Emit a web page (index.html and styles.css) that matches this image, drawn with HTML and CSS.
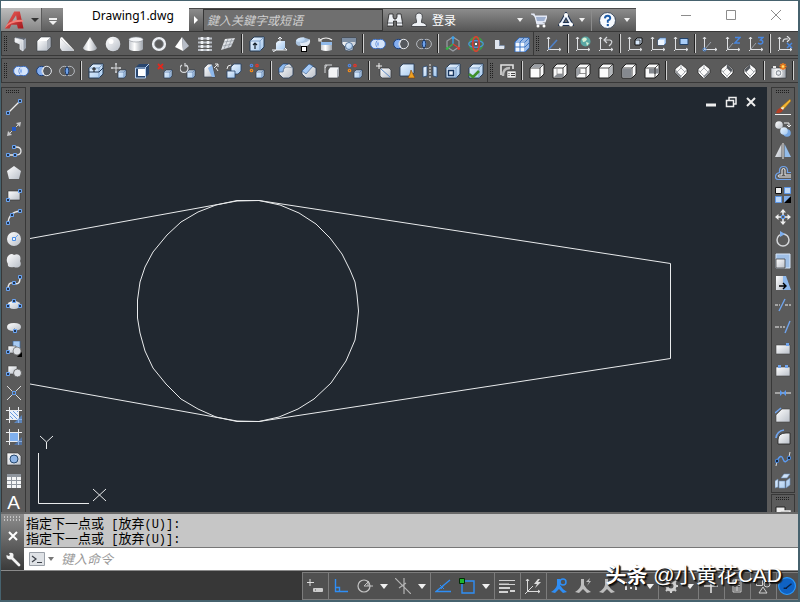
FILE: index.html
```
<!DOCTYPE html>
<html lang="zh-CN">
<head>
  <meta charset="UTF-8" />
  <meta name="viewport" content="width=device-width, initial-scale=1.0" />
  <title>Drawing1.dwg</title>
  <link rel="stylesheet" href="styles.css">
</head>
<body>
  <!-- Icon set, every symbol is drawn on a 16x16 grid -->
  <svg class="sprite" aria-hidden="true">
    <defs>
      <linearGradient id="gw" x1="0" y1="0" x2="1" y2="1"><stop offset="0" stop-color="#fff"/><stop offset="1" stop-color="#b9bfc8"/></linearGradient>
      <linearGradient id="gb" x1="0" y1="0" x2="1" y2="1"><stop offset="0" stop-color="#eef6ff"/><stop offset="1" stop-color="#a4c8ee"/></linearGradient>
      <linearGradient id="gr" x1="0" y1="0" x2="1" y2="1"><stop offset="0" stop-color="#f0625a"/><stop offset="1" stop-color="#a3161c"/></linearGradient>
      <linearGradient id="gc" x1="0" y1="0" x2="1" y2="0"><stop offset="0" stop-color="#c4c8ce"/><stop offset=".4" stop-color="#fff"/><stop offset="1" stop-color="#9da3ab"/></linearGradient>
    </defs>

    <!-- solids -->
    <symbol id="polysolid" viewBox="0 0 16 16"><path d="M2 2l8 2v11l-3-2V8L2 6z" fill="url(#gw)"/><path d="M10 4l3-2v10l-3 3z" fill="#9aa2ae"/><path d="M2 2l2-1 9 1-3 2z" fill="#5f6670"/><path d="M2 6V2l8 2v11l-3-2V8z" fill="none" stroke="#e9ecf2" stroke-width=".8"/></symbol>
    <symbol id="box" viewBox="0 0 16 16"><path d="M1 5h10v10H1z" fill="url(#gw)"/><path d="M1 5l4-4h10l-4 4z" fill="#fff"/><path d="M11 5l4-4v10l-4 4z" fill="#aab0b9"/><path d="M1 5l4-4h10v10l-4 4H1z" fill="none" stroke="#3b3f46" stroke-width=".6"/></symbol>
    <symbol id="wedge" viewBox="0 0 16 16"><path d="M1 2v10l2 3h12z" fill="url(#gw)"/><path d="M1 2l2-1 12 13v1z" fill="#fff"/></symbol>
    <symbol id="cone" viewBox="0 0 16 16"><path d="M8 1l7 11q-1 3-7 3t-7-3z" fill="url(#gc)"/></symbol>
    <symbol id="sphere" viewBox="0 0 16 16"><circle cx="8" cy="8" r="7.3" fill="url(#gw)"/><circle cx="6" cy="5.5" r="2.5" fill="#fff"/></symbol>
    <symbol id="cylinder" viewBox="0 0 16 16"><path d="M1 3v10q1 2 7 2t7-2V3z" fill="url(#gc)"/><ellipse cx="8" cy="3.5" rx="7" ry="2.5" fill="#f4f6f9" stroke="#848a92" stroke-width=".6"/></symbol>
    <symbol id="torus" viewBox="0 0 16 16"><circle cx="8" cy="8" r="5.8" fill="none" stroke="#eceff3" stroke-width="2.6"/><circle cx="8" cy="8" r="4.3" fill="none" stroke="#8f959e" stroke-width=".6"/></symbol>
    <symbol id="pyramid" viewBox="0 0 16 16"><path d="M8 1L1 11l8 4z" fill="#fff"/><path d="M8 1l7 9-6 5z" fill="#b7bdc7"/></symbol>
    <symbol id="helix" viewBox="0 0 16 16"><path d="M1 2.500h14M1 6.500h14M1 10.500h14M1 14h14" stroke="#b9bec6" stroke-width="1.800"/><path d="M5 1v14M11 1v14" stroke="#edf0f4" stroke-width="2.600" stroke-dasharray="3 1"/></symbol>
    <symbol id="planar" viewBox="0 0 16 16"><path d="M5 3l10-1-4 9-10 3z" fill="url(#gw)"/><path d="M8 3l-4 10M12 2.500l-4 9.500M4 6l10-1.500M3 10l9-2" stroke="#8d939c" stroke-width=".7"/></symbol>

    <!-- modelling and solid editing -->
    <symbol id="bluebox" viewBox="0 0 16 16"><path d="M1 5l4-4h10v10l-4 4H1z" fill="url(#gb)" stroke="#1c3350" stroke-width=".9"/><path d="M1 5h10v10M11 5l4-4" fill="none" stroke="#6d92c0" stroke-width=".8"/></symbol>
    <symbol id="push" viewBox="0 0 16 16"><use href="#bluebox"/><path d="M6 13V7M4 9l2-2 2 2" fill="none" stroke="#15202c" stroke-width="1.200"/></symbol>
    <symbol id="extrude" viewBox="0 0 16 16"><path d="M4 7l2-2h7v7l-2 2H4z" fill="url(#gb)"/><path d="M8 7V1M6 3l2-2 2 2M0 14h15M4 14l-3 2M13 12l2 2" fill="none" stroke="#eef1f5"/></symbol>
    <symbol id="sweep" viewBox="0 0 16 16"><path d="M1 5q1-4 8-3.500l6 2q0 5-6 4.500l-5 2Q0 9 1 5z" fill="#a9c1dc"/><path d="M1 5q1-4 8-3.500L10 4Q6 8 1 5z" fill="url(#gb)"/><path d="M5 6.500q5 2 10-3 1 6-5 7H6z" fill="#e3ebf5"/><rect x="6.500" y="10.500" width="5" height="5" fill="#fff" stroke="#000"/></symbol>
    <symbol id="revolve" viewBox="0 0 16 16"><path d="M3 6h11v8q-6 2-11 0z" fill="url(#gc)"/><path d="M3 6h11v3H3z" fill="#8fb8e8"/><path d="M2 4q6-4 12 0M1 2v3h3" fill="none" stroke="#f4f4f4" stroke-width="1.200"/></symbol>
    <symbol id="loft" viewBox="0 0 16 16"><path d="M1 2h14v6l-3 3v3q-4 2-8 0v-3L1 8z" fill="url(#gw)" stroke="#2e4058" stroke-width=".7"/><path d="M1 2h14v4H1z" fill="#7d8ea3"/><circle cx="8" cy="10" r="3.500" fill="url(#gb)" stroke="#54749b"/></symbol>
    <symbol id="union" viewBox="0 0 16 16"><circle cx="5.300" cy="8" r="4.700" fill="#d4e4fb" stroke="#3d6fc4"/><circle cx="10.700" cy="8" r="4.700" fill="#d4e4fb" stroke="#3d6fc4"/><path d="M8 4q-3 4 0 8 3-4 0-8z" fill="#7da7ee" stroke="#fff" stroke-width=".6"/></symbol>
    <symbol id="subtract" viewBox="0 0 16 16"><circle cx="5.300" cy="8" r="4.700" fill="#84aef0" stroke="#1c3f7a"/><circle cx="10.700" cy="8" r="4.700" fill="#55585d" stroke="#e6e9ee"/><path d="M8 4q-3 4 0 8" fill="none" stroke="#e6e9ee"/></symbol>
    <symbol id="intersect" viewBox="0 0 16 16"><g fill="none" stroke="#b4b8be"><circle cx="5.300" cy="8" r="4.700"/><circle cx="10.700" cy="8" r="4.700"/></g><path d="M8 3.600q-4 4.400 0 8.800 4-4.400 0-8.800z" fill="#6fa2ea" stroke="#0f2c5b"/></symbol>
    <symbol id="gizmo" viewBox="0 0 16 16"><path d="M8 1l6 4v6l-6 4-6-4V5z" fill="none" stroke="#9b9fa5" stroke-width="1.200"/><path d="M8 8V2" stroke="#3aa0ea" stroke-width="1.400"/><path d="M8 8l-5 4" stroke="#34b545" stroke-width="1.200"/><path d="M8 8l6 4" stroke="#e23b30" stroke-width="1.200"/><circle cx="8" cy="1.800" r="1.500" fill="#3aa0ea"/><circle cx="2.200" cy="12.600" r="1.400" fill="#34b545"/><circle cx="13.800" cy="12.600" r="1.400" fill="#e23b30"/></symbol>
    <symbol id="orbit" viewBox="0 0 16 16"><circle cx="8" cy="8" r="6.500" fill="none" stroke="#3f9a45" stroke-width="1.800"/><ellipse cx="8" cy="8" rx="7.300" ry="3.300" fill="none" stroke="#4a90d9" stroke-width="1.300"/><ellipse cx="8" cy="8" rx="3.300" ry="7.300" fill="none" stroke="#d93f33" stroke-width="1.600"/><rect x="7" y="7" width="2" height="2" fill="#fff"/></symbol>
    <symbol id="lshape" viewBox="0 0 16 16"><path d="M4 4h4v6h5v3H4z" fill="#dfe5ee"/><path d="M8 4l1 1v4h4l1 1v2l-1 1v-3H8z" fill="#8191a8"/></symbol>
    <symbol id="cubes" viewBox="0 0 16 16"><path d="M1 6l4-4h10v10l-4 4H1z" fill="#f3f8ff" stroke="#2e6cc4"/><path d="M1 6h10v10M11 6l4-4M1 11h10l4-4M6 6v10M3 4h10v10M10 2L6 6" fill="none" stroke="#2e6cc4" stroke-width=".9"/></symbol>
    <symbol id="extrface" viewBox="0 0 16 16"><use href="#bluebox"/><path d="M1 9h10l4-4" fill="none" stroke="#1c3350"/><path d="M6 9V4M4 6h4" stroke="#111"/></symbol>
    <symbol id="smallbox" viewBox="0 0 16 16"><path d="M7 9l2-2h6v6l-2 2H7z" fill="url(#gb)" stroke="#24344a" stroke-width=".7"/><path d="M7 9h6v6M13 9l2-2" fill="none" stroke="#4d70a0" stroke-width=".7"/></symbol>
    <symbol id="moveface" viewBox="0 0 16 16"><use href="#smallbox"/><path d="M5 0v10M0 5h10M4 1h2M4 9h2M1 4v2M9 4v2" stroke="#d9dbde"/></symbol>
    <symbol id="offsetface" viewBox="0 0 16 16"><path d="M1 5l4-4h10v10l-4 4H1z" fill="#29466e"/><path d="M4 6h7v7H4z" fill="#fff"/><path d="M1.500 5h10v10h-10zM11 5l4-4" fill="none" stroke="#b6d0f1"/></symbol>
    <symbol id="delface" viewBox="0 0 16 16"><use href="#smallbox"/><path d="M1 1l5 5M6 1L1 6" stroke="#e1281d" stroke-width="1.800"/></symbol>
    <symbol id="rotface" viewBox="0 0 16 16"><use href="#smallbox"/><path d="M2 2a4 4 0 1 0 4 0M5 0v3h3" fill="none" stroke="#d9dbde" stroke-width="1.200"/></symbol>
    <symbol id="taperface" viewBox="0 0 16 16"><path d="M1 14V5l4-4h4l3 13z" fill="url(#gw)" stroke="#3b4350" stroke-width=".7"/><path d="M5 5l4-3 3 12H9z" fill="#8db8ec"/><path d="M11 5l4-4M12 1h3v3M15 8l-2-3" fill="none" stroke="#e8e8e8"/></symbol>
    <symbol id="copyface" viewBox="0 0 16 16"><path d="M5 4l3-3h7v7l-3 3H5z" fill="url(#gb)" stroke="#23436b" stroke-width=".8"/><path d="M1 8h8v7H1z" fill="url(#gb)" stroke="#23436b" stroke-width=".8"/><path d="M1 6q0-4 4-4" fill="none" stroke="#eee"/></symbol>
    <symbol id="colorface" viewBox="0 0 16 16"><use href="#smallbox"/><g stroke-width="1.300" fill="none"><circle cx="2.500" cy="2.500" r="1.200" stroke="#4e86e0"/><circle cx="8" cy="2.500" r="1.200" stroke="#e0372c"/><circle cx="2.500" cy="7.500" r="1.200" stroke="#ef8a1e"/></g></symbol>
    <symbol id="fillet" viewBox="0 0 16 16"><path d="M1 5l4-4h7l3 4v7l-4 3H5l-4-4z" fill="url(#gw)" stroke="#263a55" stroke-width=".8"/><path d="M1 5l4-4h5q-4 1-5 8H1z" fill="#8fb9ec" stroke="#2f5688" stroke-width=".6"/><path d="M5 9q0-5 5-5l5 1" fill="none" stroke="#8390a2" stroke-width=".8"/></symbol>
    <symbol id="chamfer" viewBox="0 0 16 16"><path d="M1 8l7-7 7 4v7l-4 3H5l-4-4z" fill="url(#gw)" stroke="#263a55" stroke-width=".8"/><path d="M1 8l7-7 4 2-7 8z" fill="#a5c9f5" stroke="#2f5688" stroke-width=".6"/></symbol>
    <symbol id="copyedge" viewBox="0 0 16 16"><path d="M4 7l2-3h9v9l-2 2H4z" fill="#f3f4f6" stroke="#3a3d42" stroke-width=".7"/><path d="M13 7l2-3v9l-2 2z" fill="#aeb3bb"/><path d="M1 10V2h7M1 5l2-3" fill="none" stroke="#d6d8db"/></symbol>
    <symbol id="imprint" viewBox="0 0 16 16"><path d="M4 6l1-1h8l2 2v8H6l-2-2z" fill="url(#gw)" stroke="#30343a" stroke-width=".7"/><path d="M5 6l9 8" stroke="#5f8ac4"/><path d="M3 0v6M0 3h6" stroke="#f3f3f3"/></symbol>
    <symbol id="clean" viewBox="0 0 16 16"><path d="M1 4l3-3h11v9l-3 3H1z" fill="url(#gb)" stroke="#1e3654" stroke-width=".8"/><path d="M12 7l-1 4-2 4h7l-2-4z" fill="#f0a122" stroke="#7a3e08" stroke-width=".6"/></symbol>
    <symbol id="separate" viewBox="0 0 16 16"><path d="M1 4l4-1v10l-4 1zM11 3l4 1v10l-4-1z" fill="url(#gb)" stroke="#264872" stroke-width=".8"/><path d="M8 1v14" stroke="#eee" stroke-dasharray="2 1"/></symbol>
    <symbol id="shell" viewBox="0 0 16 16"><use href="#bluebox"/><path d="M3.500 7.500h5v5h-5z" fill="#e9f1fb" stroke="#18365f" stroke-width="1.400"/></symbol>
    <symbol id="check" viewBox="0 0 16 16"><use href="#bluebox"/><path d="M1 11l4 3 6-6" fill="none" stroke="#3f8f2c" stroke-width="2.600"/></symbol>
    <symbol id="viewmgr" viewBox="0 0 16 16"><path d="M1 12V2h12v4" fill="none" stroke="#e2e2e2" stroke-width="1.600"/><path d="M3 13q0-8 7-8" fill="none" stroke="#bbb" stroke-width="2.400"/><rect x="7" y="8" width="9" height="7" fill="#eee" stroke="#444" stroke-width=".6"/><path d="M8.500 10.500h1M11 10.500h4M8.500 12.500h1M11 12.500h4" stroke="#444"/></symbol>

    <!-- UCS -->
    <symbol id="axes" viewBox="0 0 16 16"><path d="M2.500 1v12.500H15M1 3l1.500-2L4 3M13 12l2 1.500-2 1.500M1 15l1.500-1.500" fill="none" stroke="#dfe1e4"/></symbol>
    <symbol id="ucs" viewBox="0 0 16 16"><use href="#axes"/><path d="M3 13l8-9" stroke="#4e80c8" stroke-width="1.600"/></symbol>
    <symbol id="ucsworld" viewBox="0 0 16 16"><use href="#axes"/><circle cx="10.500" cy="5.500" r="5" fill="#5aa7a4"/><path d="M7 3q3-3 5 0-1 3-4 3zM11 6l3 1-2 3z" fill="#d8f0d4"/></symbol>
    <symbol id="ucsprev" viewBox="0 0 16 16"><use href="#axes"/><path d="M7 4h5q3 1 1 4l-2 2M9 1L6 4l3 3" fill="none" stroke="#d5d7da" stroke-width="1.200"/></symbol>
    <symbol id="ucsface" viewBox="0 0 16 16"><use href="#axes"/><path d="M8 4l2-2h5v5l-2 2H8z" fill="#d7e8fb" stroke="#111"/><path d="M8 4h5v5" fill="none" stroke="#111" stroke-width=".8"/></symbol>
    <symbol id="ucsobj" viewBox="0 0 16 16"><use href="#axes"/><path d="M8 4l2-2h6v5l-2 2H8z" fill="#bcd9fa" stroke="#3a6db0" stroke-width=".6"/><path d="M8 4h6v5H8z" fill="#eef6ff"/></symbol>
    <symbol id="ucsview" viewBox="0 0 16 16"><use href="#axes"/><path d="M7 2.500h8v6H7z" fill="#a9cdf7" stroke="#23436b"/></symbol>
    <symbol id="ucsorigin" viewBox="0 0 16 16"><use href="#axes"/><path d="M3 13l6-7" stroke="#9aa0a8"/><circle cx="2.500" cy="13.500" r="1.500" fill="none" stroke="#4f90e6"/></symbol>
    <symbol id="ucsz" viewBox="0 0 16 16"><use href="#axes"/><path d="M3 13l5-6" stroke="#9aa0a8"/><path d="M10 1.500h5l-5 5.500h5" fill="none" stroke="#4a86dc" stroke-width="1.600"/></symbol>
    <symbol id="ucs3" viewBox="0 0 16 16"><use href="#axes"/><path d="M3 13l5-6" stroke="#9aa0a8"/><path d="M10 1.500h5l-2.500 2.500q3 .5 2 3-2 2-4.500 0" fill="none" stroke="#4a86dc" stroke-width="1.500"/></symbol>
    <symbol id="ucsx" viewBox="0 0 16 16"><use href="#axes"/><path d="M6 6q0-4 5-3M10 0l3 3-3 3" fill="none" stroke="#dfe1e4" stroke-width="1.200"/><path d="M10 7l5 5M15 7l-5 5" stroke="#4a86dc" stroke-width="1.500"/></symbol>

    <!-- views -->
    <symbol id="vcube" viewBox="0 0 16 16"><path d="M1 5l4-4h10v10l-4 4H1z" fill="#fafafa" stroke="#222"/><path d="M1 5h10v10M11 5l4-4" fill="none" stroke="#222" stroke-width=".8"/></symbol>
    <symbol id="vtop" viewBox="0 0 16 16"><use href="#vcube"/><path d="M2.200 4.500l3-3h8.600l-3 3z" fill="#9a9ea4"/></symbol>
    <symbol id="vbottom" viewBox="0 0 16 16"><use href="#vcube"/><path d="M2 14l3-3h6v3z" fill="#8b8f95"/><path d="M5 6v5h6" fill="none" stroke="#888" stroke-width=".7"/></symbol>
    <symbol id="vleft" viewBox="0 0 16 16"><use href="#vcube"/><path d="M1.500 14V5.500H5v5z" fill="#9a9ea4"/><path d="M5 10.500h6M5 6v5" stroke="#777" stroke-width=".8"/></symbol>
    <symbol id="vright" viewBox="0 0 16 16"><use href="#vcube"/><path d="M11.500 14V5.200l3-3v8.600z" fill="#b4b7bb"/></symbol>
    <symbol id="vfront" viewBox="0 0 16 16"><use href="#vcube"/><path d="M1.500 5.500h9v9h-9z" fill="#85898f"/></symbol>
    <symbol id="vback" viewBox="0 0 16 16"><use href="#vcube"/><path d="M5 5.500h9.500v5H5z" fill="#85898f"/><path d="M11 5v6" stroke="#333"/></symbol>
    <symbol id="iso" viewBox="0 0 16 16"><path d="M8 1l6 5v4l-6 6-6-6V6z" fill="#fafafa" stroke="#2c2c2c" stroke-width=".8"/><path d="M8 5l4 4-4 4-4-4zM8 1v4M2 6l2 3M14 6l-2 3M8 13v3" fill="none" stroke="#888c92" stroke-width=".7"/></symbol>
    <symbol id="isosw" viewBox="0 0 16 16"><use href="#iso"/><path d="M2.500 7L4 9.500 8 13v2l-5.500-5z" fill="#85898f"/></symbol>
    <symbol id="isose" viewBox="0 0 16 16"><use href="#iso"/><path d="M13.500 7L12 9.500 8 13v2l5.500-5z" fill="#85898f"/></symbol>
    <symbol id="isone" viewBox="0 0 16 16"><use href="#iso"/><path d="M8 1.500V5l4 4 1.500-2.500z" fill="#54585e"/></symbol>
    <symbol id="isonw" viewBox="0 0 16 16"><use href="#iso"/><path d="M8 1.500V5L4 9 2.500 6.500z" fill="#54585e"/></symbol>
    <symbol id="camera" viewBox="0 0 16 16"><path d="M0 5h15v10H0z" fill="url(#gc)" stroke="#33373d" stroke-width=".6"/><path d="M2 3h3v2H2z" fill="#e6e6e6"/><circle cx="7.500" cy="10" r="3.400" fill="#8e949c" stroke="#fff"/><circle cx="7.500" cy="10" r="1.800" fill="#e8ecf1"/><path d="M12 0v7M8.500 3.500h7M9.500 1l5 5M14.500 1l-5 5" stroke="#f07a1c" stroke-width="1.500"/><circle cx="12" cy="3.500" r="1.300" fill="#ffe36b"/></symbol>

    <!-- draw -->
    <symbol id="node" viewBox="0 0 4 4"><path d="M.5.5h3v3h-3z" fill="#1f3350" stroke="#6ba4f2"/></symbol>
    <symbol id="line" viewBox="0 0 16 16"><path d="M2 14L14 2" stroke="#eee" stroke-width="1.200"/><use href="#node" x="0" y="12" width="4" height="4"/><use href="#node" x="12" y="0" width="4" height="4"/></symbol>
    <symbol id="xline" viewBox="0 0 16 16"><path d="M2 14L14 2" stroke="#cfd0d2"/><path d="M15 1l-1 5-4-4zM1 15l1-5 4 4z" fill="#c6c7c9"/><path d="M6 6h4v4H6z" fill="#2458c4"/></symbol>
    <symbol id="pline" viewBox="0 0 16 16"><path d="M2 12h8q5 0 5-4 0-4-5-4H7" fill="none" stroke="#e6e7e9" stroke-width="1.300"/><use href="#node" x="0" y="10" width="4" height="4"/><use href="#node" x="6" y="2" width="4" height="4"/><use href="#node" x="7" y="10" width="4" height="4"/></symbol>
    <symbol id="polygon" viewBox="0 0 16 16"><path d="M8 1l7 5-2 8H3L1 6z" fill="url(#gw)"/></symbol>
    <symbol id="rect" viewBox="0 0 16 16"><path d="M2 4h12v9H2z" fill="url(#gw)" stroke="#333" stroke-width=".6"/><use href="#node" x="0" y="11" width="4" height="4"/><use href="#node" x="12" y="2" width="4" height="4"/></symbol>
    <symbol id="arc" viewBox="0 0 16 16"><path d="M2 14Q3 3 14 2" fill="none" stroke="#e6e7e9" stroke-width="1.300"/><use href="#node" x="0" y="12" width="4" height="4"/><use href="#node" x="4" y="4" width="4" height="4"/><use href="#node" x="12" y="0" width="4" height="4"/></symbol>
    <symbol id="circle" viewBox="0 0 16 16"><circle cx="8" cy="8" r="7" fill="url(#gw)"/><path d="M8 8l4-4" stroke="#6ba4f2"/><path d="M6.500 6.500h3v3h-3z" fill="#e9f2ff" stroke="#4d8fe6"/></symbol>
    <symbol id="cloud" viewBox="0 0 16 16"><path d="M3 2q3-2 5 0 4-2 6 1 1 3 0 5 2 4-1 6-3 1-5 0-4 1-6-1 0-3-1-4Q0 4 3 2z" fill="url(#gw)"/></symbol>
    <symbol id="spline" viewBox="0 0 16 16"><path d="M2 14q0-7 5-6 7 3 7-5" fill="none" stroke="#e6e7e9" stroke-width="1.400"/><use href="#node" x="0" y="12" width="4" height="4"/><use href="#node" x="6" y="6" width="4" height="4"/><use href="#node" x="12" y="0" width="4" height="4"/></symbol>
    <symbol id="ellipse" viewBox="0 0 16 16"><ellipse cx="8" cy="8" rx="6.500" ry="4" fill="url(#gw)"/><use href="#node" x="6" y="2" width="4" height="4"/><use href="#node" x="0" y="7" width="4" height="4"/><use href="#node" x="12" y="7" width="4" height="4"/></symbol>
    <symbol id="earc" viewBox="0 0 16 16"><path d="M1 8q0-4 7-4t7 4q0 3-5 3.500L8 9v3Q1 12 1 8z" fill="url(#gw)"/><use href="#node" x="7" y="10" width="4" height="4"/></symbol>
    <symbol id="insert" viewBox="0 0 16 16"><path d="M7 0h7v8H7z" fill="#a9cbf2" stroke="#3d6aa5" stroke-width=".7"/><path d="M2 5h8v7H2z" fill="url(#gw)" stroke="#444" stroke-width=".6"/><circle cx="11" cy="10" r="4" fill="#dde0e4" stroke="#555" stroke-width=".6"/><path d="M16 11v5h-5z" fill="#000"/><use href="#node" x="0" y="9" width="4" height="4"/></symbol>
    <symbol id="block" viewBox="0 0 16 16"><path d="M2 3h9v8H2z" fill="url(#gw)" stroke="#444" stroke-width=".6"/><circle cx="11.500" cy="10" r="4" fill="#dde0e4" stroke="#555" stroke-width=".8"/><use href="#node" x="0" y="9" width="4" height="4"/></symbol>
    <symbol id="point" viewBox="0 0 16 16"><path d="M1 1l14 14M15 1L1 15" stroke="#dcdcdc"/><path d="M6.500 6.500h3v3h-3z" fill="#5a5a5a" stroke="#5d9bf0"/></symbol>
    <symbol id="hatch" viewBox="0 0 16 16"><path d="M3.500 3.500h9v9h-9z" fill="#e9f1fb"/><path d="M4 9l3 3M4 5l8 8M7 4l6 6M11 4l2 2" stroke="#6a9ade"/><path d="M3.500 0v16M12.500 0v16M0 3.500h16M0 12.500h16" stroke="#eceef1"/><path d="M16 8v8H8z" fill="#5d95e2" opacity=".7"/></symbol>
    <symbol id="gradient" viewBox="0 0 16 16"><path d="M3.500 3.500h9v9h-9z" fill="#7fb0ef"/><path d="M3.500 0v16M12.500 0v16M0 3.500h16M0 12.500h16" stroke="#eceef1"/><path d="M16 8v8H8z" fill="#4c84d2" opacity=".6"/></symbol>
    <symbol id="region" viewBox="0 0 16 16"><path d="M1 2h11l3 3v9H1z" fill="url(#gw)" stroke="#333" stroke-width=".6"/><circle cx="8" cy="8" r="4" fill="#8fb5e6" stroke="#27496f"/></symbol>
    <symbol id="table" viewBox="0 0 16 16"><path d="M1 1h14v14H1z" fill="#f4f5f6"/><path d="M1 1h14v3H1z" fill="#8f959d"/><path d="M5.500 4v11M10.500 4v11M1 7.500h14M1 11.500h14" stroke="#8f959d"/></symbol>

    <!-- modify -->
    <symbol id="erase" viewBox="0 0 16 16"><path d="M15 0l1 2-8 9-3-2z" fill="#f2b632" stroke="#8a5a10" stroke-width=".5"/><path d="M9 8l-1 3-2.500-2z" fill="#eee"/><path d="M8 11l-3-2q-3 1-4 5 5 1 7-3z" fill="#b53f24"/><path d="M0 15.500h16" stroke="#eee"/></symbol>
    <symbol id="copy" viewBox="0 0 16 16"><circle cx="4" cy="4" r="3.800" fill="url(#gw)"/><circle cx="12" cy="12" r="3.800" fill="#77a7e2"/><circle cx="9" cy="10" r="3.800" fill="url(#gb)"/><path d="M9 2h5v4M12 4l2 2 2-2" fill="none" stroke="#eee"/></symbol>
    <symbol id="mirror" viewBox="0 0 16 16"><path d="M6.500 1v13H0z" fill="url(#gw)"/><path d="M9.500 1v13H16z" fill="#93bcea"/><path d="M8 0v16" stroke="#eee"/></symbol>
    <symbol id="offset" viewBox="0 0 16 16"><path d="M16 14.500H3q-3-.5-2.500-3.500T4.500 7.500V5q.5-3.500 4-3.500t4 3.500v2.500H16" fill="none" stroke="#6fa3ec" stroke-width="1.200"/><path d="M16 12H4q-1-.5-1-1t1-1h3V5q0-1.500 1.500-1.500T10 5v5h6" fill="none" stroke="#f1f1f1"/></symbol>
    <symbol id="array" viewBox="0 0 16 16"><path d="M.5.500h6v6h-6z" fill="#eee" stroke="#111"/><path d="M9.500.500h6v6h-6zM.5 9.500h6v6h-6z" fill="#bcd7f8" stroke="#5e97e6"/><path d="M9 9h7v7H9z" fill="#7eaae6"/><path d="M16 9v7H9z" fill="#000"/></symbol>
    <symbol id="move" viewBox="0 0 16 16"><path d="M8 0l3 3.500H5zM8 16l3-3.500H5zM0 8l3.500-3v6zM16 8l-3.500-3v6z" fill="#eee"/><path d="M8 3v3M8 10v3M3 8h3M10 8h3" stroke="#eee" stroke-width="1.500"/><path d="M6.500 6.500h3v3h-3z" fill="none" stroke="#5d9bf0"/></symbol>
    <symbol id="rotate" viewBox="0 0 16 16"><circle cx="8" cy="9" r="6" fill="none" stroke="#d4d6d9" stroke-width="1.500"/><path d="M5 0l5 3-5 3z" fill="#7daeee"/></symbol>
    <symbol id="scale" viewBox="0 0 16 16"><path d="M1 1h14v14H1z" fill="#9fbfe6" stroke="#d7e6f8"/><path d="M1 6h9v9H1z" fill="url(#gw)" stroke="#333" stroke-width=".7"/></symbol>
    <symbol id="stretch" viewBox="0 0 16 16"><path d="M1 1h7v14H1z" fill="url(#gw)"/><path d="M8 1h3l5 14H8z" fill="#8db8ec"/><path d="M4 11h6M8 8l3 3-3 3" fill="none" stroke="#000" stroke-width="1.400"/></symbol>
    <symbol id="trim" viewBox="0 0 16 16"><path d="M0 8h5M10 8h6" stroke="#eee" stroke-dasharray="3 1"/><path d="M10 2L4 14" stroke="#6fa3ec" stroke-width="1.400"/></symbol>
    <symbol id="extend" viewBox="0 0 16 16"><path d="M0 8h4M5 8h2M8 8h2" stroke="#eee"/><path d="M15 2L10 14" stroke="#6fa3ec" stroke-width="1.400"/></symbol>
    <symbol id="breakpt" viewBox="0 0 16 16"><path d="M1 4h14v9H1z" fill="url(#gw)" stroke="#444" stroke-width=".6"/><path d="M11 2h3v3h-3z" fill="#6fa3ec"/></symbol>
    <symbol id="break" viewBox="0 0 16 16"><path d="M1 4h14v9H1z" fill="url(#gw)" stroke="#444" stroke-width=".6"/><path d="M3 2h3v3H3zM10 2h3v3h-3z" fill="#6fa3ec"/></symbol>
    <symbol id="join" viewBox="0 0 16 16"><path d="M0 8h16" stroke="#eee"/><path d="M5 5l3 3-3 3zM11 5L8 8l3 3z" fill="#5d9bf0"/></symbol>
    <symbol id="chamfer2" viewBox="0 0 16 16"><path d="M1 8l6-6h8v13H1z" fill="url(#gw)" stroke="#444" stroke-width=".6"/><path d="M0 6l6-5" stroke="#6fa3ec" stroke-width="1.600"/></symbol>
    <symbol id="fillet2" viewBox="0 0 16 16"><path d="M3 15v-4q0-7 8-7h4v11z" fill="url(#gw)" stroke="#222" stroke-width=".8"/><path d="M1 9q1-7 8-8" fill="none" stroke="#6fa3ec" stroke-width="1.700"/></symbol>
    <symbol id="blend" viewBox="0 0 16 16"><path d="M2 10Q6 2 8 8t6-1" fill="none" stroke="#5d9bf0" stroke-width="1.400"/><path d="M1 15l1-5M14 6l1-5" stroke="#ddd"/><circle cx="2" cy="10" r="1.800" fill="#132640" stroke="#4d8fe6"/><circle cx="14" cy="7" r="1.800" fill="#132640" stroke="#4d8fe6"/></symbol>
    <symbol id="explode" viewBox="0 0 16 16"><path d="M0 8l3-2v8l-3 1zM4 8h6v7H4zM11 8l4-3v7l-4 3zM6 5l3-4h6l-3 4z" fill="url(#gb)" stroke="#6b8db8" stroke-width=".6"/></symbol>
    <symbol id="order" viewBox="0 0 16 16"><path d="M1 1h9v6H1z" fill="#eee" stroke="#222"/><path d="M5 5h10v8H5z" fill="#6b6b6b" stroke="#eee" stroke-width="1.500"/></symbol>

    <!-- info centre -->
    <symbol id="binoculars" viewBox="0 0 16 16"><path d="M2 2h4v3l1 2h2l1-2V2h4l2 12H9.500V9h-3v5H0z" fill="#eef1f5" stroke="#222" stroke-width=".8"/><path d="M1 11h5M10 11h5" stroke="#60656c"/></symbol>
    <symbol id="user" viewBox="0 0 16 16"><path d="M5.500 9Q3 1 8 1t2.500 8v1.500q5 .5 5 4H.5q0-3.500 5-4z" fill="#eef1f5" stroke="#33363a" stroke-width=".8"/></symbol>
    <symbol id="cart" viewBox="0 0 16 16"><path d="M0 2h3l3 8h8l2-6H4l2 8h8" fill="#d8dfea" stroke="#e9eefb" stroke-width="1.200"/><path d="M5 5h10l-2 4H6z" fill="#9fb0cf"/><circle cx="7" cy="14" r="1.500" fill="#fff"/><circle cx="13" cy="14" r="1.500" fill="#fff"/></symbol>
    <symbol id="a360" viewBox="0 0 16 16"><path d="M8 3l-5 9h10z" fill="none" stroke="#1f3250" stroke-width="4"/><path d="M8 3l-5 9h10z" fill="none" stroke="#e6edf9" stroke-width="2"/><circle cx="8" cy="3" r="2" fill="#fff"/><circle cx="3" cy="12.500" r="2" fill="#fff"/><circle cx="13" cy="12.500" r="2" fill="#fff"/></symbol>
    <symbol id="help" viewBox="0 0 16 16"><circle cx="8" cy="8" r="7.500" fill="#f6f9fd" stroke="#2e3c50" stroke-width=".8"/><path d="M5.500 6q.3-2.500 2.700-2.500T10.600 6Q10.400 7.200 8.300 8.200V10" fill="none" stroke="#1d5ca8" stroke-width="1.800"/><path d="M7.300 11.300h2v2h-2z" fill="#1d5ca8"/></symbol>
    <symbol id="wrench" viewBox="0 0 16 16"><path d="M7 7l7 7" stroke="#f2f2f2" stroke-width="2.800" stroke-linecap="round"/><path d="M4 2l1 2-1 1-2.500-1Q1 8 4.500 8.500T8.500 5 4 2z" fill="#f2f2f2"/></symbol>

    <!-- status bar -->
    <symbol id="s-dyn" viewBox="0 0 16 16"><path d="M3 1v7M0 4.500h7" stroke="#ddd"/><rect x="6" y="10" width="10" height="4" rx="1" fill="#ccc"/><path d="M8 12h1" stroke="#555"/></symbol>
    <symbol id="s-ortho" viewBox="0 0 16 16"><path d="M2.500 1v12.500H15M2.500 9.500h4v4" fill="none" stroke="#2f8ef5" stroke-width="1.400"/></symbol>
    <symbol id="s-polar" viewBox="0 0 16 16"><circle cx="7" cy="8" r="6" fill="none" stroke="#c4c4c4" stroke-width="1.200"/><path d="M7 8h9M7 8l5-5M11 4v4" fill="none" stroke="#c4c4c4"/></symbol>
    <symbol id="s-iso" viewBox="0 0 16 16"><path d="M0 0l16 16M9 0v16M4 10l7-5" stroke="#b4b4b4" stroke-width="1.200"/></symbol>
    <symbol id="s-track" viewBox="0 0 16 16"><path d="M15 2L1 13.500h15" fill="none" stroke="#2f8ef5" stroke-width="1.400"/><path d="M5 7l4 4M6 11l3-4" stroke="#2f8ef5"/></symbol>
    <symbol id="s-snap" viewBox="0 0 16 16"><path d="M3 3h12v12H3z" fill="none" stroke="#2f8ef5" stroke-width="1.400"/><path d="M.5.500h5v5h-5z" fill="#1fb52d" stroke="#022b06"/></symbol>
    <symbol id="s-lwt" viewBox="0 0 16 16"><path d="M0 2.500h16M0 6.500h16M0 6h10" stroke="#d2d2d2"/><path d="M0 10h11M0 14h9M11 13h5" stroke="#d2d2d2" stroke-width="2"/></symbol>
    <symbol id="s-ducs" viewBox="0 0 16 16"><path d="M2.500 1v12.500H15M0 16l8-8M1 3l1.500-2L4 3M13 12l2 1.500-2 1.500" fill="none" stroke="#dcdcdc"/><path d="M13 1L9 6h3l-2 4 6-6h-3l2-3z" fill="#ddd"/></symbol>
    <symbol id="s-ann" viewBox="0 0 16 16"><path d="M6 1h3v6q2 4 7 7l-4 1-4-4-4 4-4-1q5-3 6-7z" fill="currentColor"/></symbol>
    <symbol id="s-annvis" viewBox="0 0 16 16"><use href="#s-ann"/><circle cx="12" cy="4" r="3" fill="none" stroke="currentColor" stroke-width="1.500"/></symbol>
    <symbol id="s-annauto" viewBox="0 0 16 16"><use href="#s-ann"/><path d="M15 0l-4 4h3l-2 4 4-5h-2z" fill="currentColor"/></symbol>
    <symbol id="s-scale" viewBox="0 0 16 16"><path d="M3 4v8M13 4v8" stroke="#ddd" stroke-width="2"/><path d="M7 5h2v2H7zM7 9h2v2H7z" fill="#ddd"/></symbol>
    <symbol id="s-gear" viewBox="0 0 16 16"><circle cx="8" cy="8" r="4" fill="none" stroke="#cfcfcf" stroke-width="3"/><path d="M8 1v3M8 12v3M1 8h3M12 8h3M3 3l2 2M11 11l2 2M13 3l-2 2M3 13l2-2" stroke="#cfcfcf" stroke-width="2"/></symbol>
    <symbol id="s-plus" viewBox="0 0 16 16"><path d="M8 1v14M1 8h14" stroke="#ddd" stroke-width="1.600"/></symbol>
    <symbol id="s-props" viewBox="0 0 16 16"><path d="M4 2h8v12H4z" fill="none" stroke="#ccc"/><path d="M5 5h6M5 7.500h6M5 10h6M5 12h6M8 4v9" stroke="#ccc"/></symbol>
    <symbol id="s-iso2" viewBox="0 0 16 16"><path d="M1.500 1.500h6v6h-6zM8 9l4 6H4z" fill="none" stroke="#d0d0d0"/><circle cx="12" cy="6" r="3" fill="none" stroke="#d0d0d0"/></symbol>
    <symbol id="s-perf" viewBox="0 0 16 16"><circle cx="8" cy="8" r="7.500" fill="#0f62c4" stroke="#2b9bff"/><path d="M7 10l5-4M5 10h3" stroke="#0b2246" stroke-width="1.400"/></symbol>
  </svg>

  <header class="titlebar">
    <button class="logo" aria-label="应用程序菜单">
      <svg viewBox="0 0 30 22"><path d="M2 20L12 2h6l4 18h-6l-1-4H9l-2 4z" fill="url(#gr)"/><path d="M10 12l4-6 1 6z" fill="#a8a8a8"/><path d="M2 20q6-8 20-7l-1-2q-10-1-17 5z" fill="#f58079"/></svg>
      <span class="arrow dark"></span>
    </button>
    <button class="quick" aria-label="自定义快速访问工具栏"><span class="arrow wide"></span></button>
    <h1>Drawing1.dwg</h1>
    <div class="infobar">
      <button class="expand" aria-label="展开"><span class="arrow-right"></span></button>
      <input type="text" class="search" placeholder="鍵入关鍵字或短语" aria-label="搜索">
      <button class="info" aria-label="查找"><svg><use href="#binoculars"/></svg></button>
      <button class="login"><svg><use href="#user"/></svg>登录<span class="arrow"></span></button>
      <button class="info" aria-label="应用商店"><svg><use href="#cart"/></svg></button>
      <button class="info menu" aria-label="保持连接"><svg><use href="#a360"/></svg><span class="arrow"></span></button>
      <button class="info menu help" aria-label="帮助"><svg><use href="#help"/></svg><span class="arrow"></span></button>
    </div>
    <div class="window-buttons">
      <button aria-label="最小化"><svg viewBox="0 0 12 12"><path d="M1 6.500h10"/></svg></button>
      <button aria-label="最大化"><svg viewBox="0 0 12 12"><path d="M1.500 1.500h9v9h-9z"/></svg></button>
      <button aria-label="关闭"><svg viewBox="0 0 12 12"><path d="M1 1l10 10M11 1L1 11"/></svg></button>
    </div>
  </header>

  <div class="toolbars">
    <div class="row">
      <div class="bar" role="toolbar" aria-label="建模">
        <span class="grip"></span>
        <button aria-label="多段体"><svg><use href="#polysolid"/></svg></button>
        <button aria-label="长方体"><svg><use href="#box"/></svg></button>
        <button aria-label="楔体"><svg><use href="#wedge"/></svg></button>
        <button aria-label="圆锥体"><svg><use href="#cone"/></svg></button>
        <button aria-label="球体"><svg><use href="#sphere"/></svg></button>
        <button aria-label="圆柱体"><svg><use href="#cylinder"/></svg></button>
        <button aria-label="圆环体"><svg><use href="#torus"/></svg></button>
        <button aria-label="棱锥体"><svg><use href="#pyramid"/></svg></button>
        <button aria-label="螺旋"><svg><use href="#helix"/></svg></button>
        <button aria-label="平面曲面"><svg><use href="#planar"/></svg></button>
        <i class="sep"></i>
        <button aria-label="按住并拖动"><svg><use href="#push"/></svg></button>
        <button aria-label="拉伸"><svg><use href="#extrude"/></svg></button>
        <button aria-label="扫掠"><svg><use href="#sweep"/></svg></button>
        <button aria-label="旋转成体"><svg><use href="#revolve"/></svg></button>
        <button aria-label="放样"><svg><use href="#loft"/></svg></button>
        <i class="sep"></i>
        <button aria-label="并集"><svg><use href="#union"/></svg></button>
        <button aria-label="差集"><svg><use href="#subtract"/></svg></button>
        <button aria-label="交集"><svg><use href="#intersect"/></svg></button>
        <i class="sep"></i>
        <button aria-label="三维移动"><svg><use href="#gizmo"/></svg></button>
        <button aria-label="三维旋转"><svg><use href="#orbit"/></svg></button>
        <button aria-label="三维对齐"><svg><use href="#lshape"/></svg></button>
        <button aria-label="三维阵列"><svg><use href="#cubes"/></svg></button>
      </div>
      <div class="bar grow" role="toolbar" aria-label="UCS">
        <span class="grip"></span>
        <button aria-label="UCS"><svg><use href="#ucs"/></svg></button>
        <i class="sep"></i>
        <button aria-label="世界"><svg><use href="#ucsworld"/></svg></button>
        <button aria-label="上一个"><svg><use href="#ucsprev"/></svg></button>
        <i class="sep"></i>
        <button aria-label="面"><svg><use href="#ucsface"/></svg></button>
        <button aria-label="对象"><svg><use href="#ucsobj"/></svg></button>
        <button aria-label="视图"><svg><use href="#ucsview"/></svg></button>
        <i class="sep"></i>
        <button aria-label="原点"><svg><use href="#ucsorigin"/></svg></button>
        <button aria-label="Z 轴矢量"><svg><use href="#ucsz"/></svg></button>
        <button aria-label="三点"><svg><use href="#ucs3"/></svg></button>
        <i class="sep"></i>
        <button aria-label="X"><svg><use href="#ucsx"/></svg></button>
      </div>
    </div>
    <div class="row">
      <div class="bar" role="toolbar" aria-label="实体编辑">
        <span class="grip"></span>
        <button aria-label="并集"><svg><use href="#union"/></svg></button>
        <button aria-label="差集"><svg><use href="#subtract"/></svg></button>
        <button aria-label="交集"><svg><use href="#intersect"/></svg></button>
        <i class="sep"></i>
        <button aria-label="拉伸面"><svg><use href="#extrface"/></svg></button>
        <button aria-label="移动面"><svg><use href="#moveface"/></svg></button>
        <button aria-label="偏移面"><svg><use href="#offsetface"/></svg></button>
        <button aria-label="删除面"><svg><use href="#delface"/></svg></button>
        <button aria-label="旋转面"><svg><use href="#rotface"/></svg></button>
        <button aria-label="倾斜面"><svg><use href="#taperface"/></svg></button>
        <button aria-label="复制面"><svg><use href="#copyface"/></svg></button>
        <button aria-label="着色面"><svg><use href="#colorface"/></svg></button>
        <i class="sep"></i>
        <button aria-label="圆角边"><svg><use href="#fillet"/></svg></button>
        <button aria-label="倒角边"><svg><use href="#chamfer"/></svg></button>
        <button aria-label="复制边"><svg><use href="#copyedge"/></svg></button>
        <button aria-label="着色边"><svg><use href="#colorface"/></svg></button>
        <i class="sep"></i>
        <button aria-label="压印"><svg><use href="#imprint"/></svg></button>
        <button aria-label="清除"><svg><use href="#clean"/></svg></button>
        <button aria-label="分割"><svg><use href="#separate"/></svg></button>
        <button aria-label="抽壳"><svg><use href="#shell"/></svg></button>
        <button aria-label="检查"><svg><use href="#check"/></svg></button>
      </div>
      <div class="bar grow" role="toolbar" aria-label="视图">
        <span class="grip"></span>
        <button aria-label="视图管理器"><svg><use href="#viewmgr"/></svg></button>
        <i class="sep"></i>
        <button aria-label="俯视"><svg><use href="#vtop"/></svg></button>
        <button aria-label="仰视"><svg><use href="#vbottom"/></svg></button>
        <button aria-label="左视"><svg><use href="#vleft"/></svg></button>
        <button aria-label="右视"><svg><use href="#vright"/></svg></button>
        <button aria-label="前视"><svg><use href="#vfront"/></svg></button>
        <button aria-label="后视"><svg><use href="#vback"/></svg></button>
        <i class="sep"></i>
        <button aria-label="西南等轴测"><svg><use href="#isosw"/></svg></button>
        <button aria-label="东南等轴测"><svg><use href="#isose"/></svg></button>
        <button aria-label="东北等轴测"><svg><use href="#isone"/></svg></button>
        <button aria-label="西北等轴测"><svg><use href="#isonw"/></svg></button>
        <i class="sep"></i>
        <button aria-label="创建相机"><svg><use href="#camera"/></svg></button>
        <i class="sep"></i>
      </div>
    </div>
  </div>

  <main>
    <aside class="side left">
      <div class="palette" role="toolbar" aria-label="绘图">
        <span class="grip"></span>
        <button aria-label="直线"><svg><use href="#line"/></svg></button>
        <button aria-label="构造线"><svg><use href="#xline"/></svg></button>
        <button aria-label="多段线"><svg><use href="#pline"/></svg></button>
        <button aria-label="多边形"><svg><use href="#polygon"/></svg></button>
        <button aria-label="矩形"><svg><use href="#rect"/></svg></button>
        <button aria-label="圆弧"><svg><use href="#arc"/></svg></button>
        <button aria-label="圆"><svg><use href="#circle"/></svg></button>
        <button aria-label="修订云线"><svg><use href="#cloud"/></svg></button>
        <button aria-label="样条曲线"><svg><use href="#spline"/></svg></button>
        <button aria-label="椭圆"><svg><use href="#ellipse"/></svg></button>
        <button aria-label="椭圆弧"><svg><use href="#earc"/></svg></button>
        <button aria-label="插入块"><svg><use href="#insert"/></svg></button>
        <button aria-label="创建块"><svg><use href="#block"/></svg></button>
        <button aria-label="点"><svg><use href="#point"/></svg></button>
        <button aria-label="图案填充"><svg><use href="#hatch"/></svg></button>
        <button aria-label="渐变色"><svg><use href="#gradient"/></svg></button>
        <button aria-label="面域"><svg><use href="#region"/></svg></button>
        <button aria-label="表格"><svg><use href="#table"/></svg></button>
        <button class="text-tool" aria-label="多行文字">A</button>
      </div>
    </aside>

    <section class="canvas">
      <svg class="drawing" role="img" aria-label="图形">
        <!-- outline tangent to the circle -->
        <path d="M0 151.500L207 114L229 113.500L640.500 176.500V271.500L229 334.500L207 334L0 297"/>
        <polygon points="207,113.500 229,113.500 250,118 269,126 286,137 300,151 312,167 320,183 325,195 327,208 328.500,224 327,239 325,253 316,274 301,296 284,312 268,322 249,330 229,334.500 207,334.500 186,330 168,322 151,312 136,297 123,281 115,264 110,246 107.500,231 107.500,213 110,195 115,180 123,165 137,148 151,135 168,125 186,118"/>
        <!-- UCS icon -->
        <path d="M8.500 366V416.500H59M10 349l6.500 6 6.500-6M16.500 355v7M63 402l13 12M76 402l-13 12"/>
      </svg>
      <div class="doc-buttons">
        <button aria-label="最小化"><svg viewBox="0 0 12 12"><path d="M1 9h10" stroke-width="3"/></svg></button>
        <button aria-label="还原"><svg viewBox="0 0 12 12"><path d="M4 4V1.500h7V8H9M1.500 4.500h7v6h-7z" stroke-width="1.500"/></svg></button>
        <button aria-label="关闭"><svg viewBox="0 0 12 12"><path d="M2 2l8 8M10 2l-8 8" stroke-width="2"/></svg></button>
      </div>
    </section>

    <aside class="side right">
      <div class="palette" role="toolbar" aria-label="修改">
        <span class="grip"></span>
        <button aria-label="删除"><svg><use href="#erase"/></svg></button>
        <button aria-label="复制"><svg><use href="#copy"/></svg></button>
        <button aria-label="镜像"><svg><use href="#mirror"/></svg></button>
        <button aria-label="偏移"><svg><use href="#offset"/></svg></button>
        <button aria-label="阵列"><svg><use href="#array"/></svg></button>
        <button aria-label="移动"><svg><use href="#move"/></svg></button>
        <button aria-label="旋转"><svg><use href="#rotate"/></svg></button>
        <button aria-label="缩放"><svg><use href="#scale"/></svg></button>
        <button aria-label="拉伸"><svg><use href="#stretch"/></svg></button>
        <button aria-label="修剪"><svg><use href="#trim"/></svg></button>
        <button aria-label="延伸"><svg><use href="#extend"/></svg></button>
        <button aria-label="打断于点"><svg><use href="#breakpt"/></svg></button>
        <button aria-label="打断"><svg><use href="#break"/></svg></button>
        <button aria-label="合并"><svg><use href="#join"/></svg></button>
        <button aria-label="倒角"><svg><use href="#chamfer2"/></svg></button>
        <button aria-label="圆角"><svg><use href="#fillet2"/></svg></button>
        <button aria-label="光顺曲线"><svg><use href="#blend"/></svg></button>
        <button aria-label="分解"><svg><use href="#explode"/></svg></button>
      </div>
      <div class="palette" role="toolbar" aria-label="绘图次序">
        <span class="grip"></span>
        <button aria-label="前置"><svg><use href="#order"/></svg></button>
      </div>
    </aside>
  </main>

  <section class="command">
    <div class="command-side">
      <span class="grip"></span>
      <button aria-label="关闭"><svg viewBox="0 0 16 16"><path d="M4 4l8 8M12 4l-8 8" stroke="#fff" stroke-width="2"/></svg></button>
      <button aria-label="自定义"><svg><use href="#wrench"/></svg></button>
    </div>
    <div class="command-body">
      <div class="history">
        <p>指定下一点或<span> [</span>放弃<span>(U)]:</span></p>
        <p>指定下一点或<span> [</span>放弃<span>(U)]:</span></p>
      </div>
      <div class="prompt">
        <button aria-label="最近使用的命令">
          <svg viewBox="0 0 16 16"><path d="M.5 1.500h15v13H.5z" fill="#dfe2e6" stroke="#9aa0a8"/><path d="M3 5l4 3-4 3M8 11.500h5" fill="none" stroke="#3b4048" stroke-width="1.200"/></svg>
          <span class="arrow grey"></span>
        </button>
        <input type="text" placeholder="键入命令" aria-label="命令行">
      </div>
    </div>
  </section>

  <footer class="status">
    <div class="group"><button aria-label="动态输入"><svg><use href="#s-dyn"/></svg></button></div>
    <div class="group">
      <button aria-label="正交"><svg><use href="#s-ortho"/></svg></button>
      <button aria-label="极轴追踪"><svg><use href="#s-polar"/></svg></button>
      <button class="drop" aria-label="极轴设置"><span class="arrow big"></span></button>
      <button aria-label="等轴测草图"><svg><use href="#s-iso"/></svg></button>
      <button class="drop" aria-label="等轴测设置"><span class="arrow big"></span></button>
    </div>
    <div class="group">
      <button aria-label="对象捕捉追踪"><svg><use href="#s-track"/></svg></button>
      <button aria-label="对象捕捉"><svg><use href="#s-snap"/></svg></button>
      <button class="drop" aria-label="捕捉设置"><span class="arrow big"></span></button>
    </div>
    <div class="group"><button aria-label="线宽"><svg><use href="#s-lwt"/></svg></button></div>
    <div class="group"><button aria-label="动态 UCS"><svg><use href="#s-ducs"/></svg></button></div>
    <div class="group">
      <button class="on" aria-label="注释可见性"><svg><use href="#s-annvis"/></svg></button>
      <button aria-label="自动缩放"><svg><use href="#s-annauto"/></svg></button>
      <button aria-label="注释比例"><svg><use href="#s-ann"/></svg></button>
      <button aria-label="比例"><svg><use href="#s-scale"/></svg></button>
      <button class="drop" aria-label="比例列表"><span class="arrow big"></span></button>
    </div>
    <div class="group">
      <button aria-label="切换工作空间"><svg><use href="#s-gear"/></svg></button>
      <button class="drop" aria-label="工作空间列表"><span class="arrow big"></span></button>
    </div>
    <div class="group"><button aria-label="注释监视器"><svg><use href="#s-plus"/></svg></button></div>
    <div class="group"><button aria-label="快捷特性"><svg><use href="#s-props"/></svg></button></div>
    <div class="group"><button aria-label="隔离对象"><svg><use href="#s-iso2"/></svg></button></div>
    <div class="group perf"><button aria-label="硬件加速"><svg><use href="#s-perf"/></svg></button></div>
  </footer>

  <div class="watermark"><b>头条</b> @小黄花CAD</div>
</body>
</html>
```
FILE: styles.css
```
* {
  box-sizing: border-box;
  margin: 0;
  padding: 0;
}

body {
  display: flex;
  flex-direction: column;
  height: 100vh;
  overflow: hidden;
  position: relative;
  background-color: #5b5b5b;
  border: 1px solid #46626e;
  border-right-width: 2px;
  border-bottom-width: 2px;
  font-family: "Noto Sans", "Noto Sans CJK SC", sans-serif;
  font-size: 12px;
}

button {
  display: flex;
  align-items: center;
  justify-content: center;
  flex: none;
  border: none;
  background: none;
  font: inherit;
  color: inherit;
}

input {
  border: none;
  font: inherit;
  outline: none;
  min-width: 0;
}

button svg {
  width: 16px;
  height: 16px;
  flex: none;
}

.sprite {
  position: absolute;
  width: 0;
  height: 0;
}

.arrow {
  border: 3px solid transparent;
  border-top: 4px solid #f0f0f0;
  border-bottom: none;
}

.arrow.dark {
  border-width: 4px 4px 0;
  border-top-color: #333;
}

.arrow.grey {
  border-top-color: #777;
}

.arrow.big {
  border-width: 5px 4px 0;
}

.arrow.wide {
  border-width: 4px 4px 0;
  position: relative;
}

.arrow.wide::before {
  content: "";
  position: absolute;
  left: -4px;
  top: -7px;
  width: 8px;
  height: 2px;
  background-color: #f0f0f0;
}

.arrow-right {
  border: 4px solid transparent;
  border-left: 4px solid #fff;
  border-right: none;
}

/* title bar */
.titlebar {
  display: flex;
  flex: none;
  height: 30px;
  background-color: #fff;
}

.titlebar > .logo,
.titlebar > .quick,
.infobar {
  align-self: flex-end;
  height: 23px;
}

.logo {
  width: 40px;
  background: linear-gradient(#bcbcbc, #868686);
}

.logo svg {
  width: 28px;
  height: 22px;
}

.quick {
  width: 22px;
  padding-top: 6px;
  background: linear-gradient(#8f8f8f, #5e5e5e);
  border-left: 1px solid #5a5a5a;
}

h1 {
  width: 126px;
  padding-left: 29px;
  font-size: 12px;
  font-weight: normal;
  line-height: 30px;
  color: #000;
  white-space: nowrap;
}

.infobar {
  display: flex;
  align-items: center;
  background: linear-gradient(#8c8c8c, #565656);
  border-top: 1px solid #4a4a4a;
  color: #fff;
}

.expand {
  width: 14px;
}

.search {
  width: 180px;
  height: 22px;
  padding-left: 3px;
  background-color: #6f6f6f;
  border: 1px solid #363636;
  color: #fff;
  font-style: italic;
}

.search::placeholder {
  color: #d0d0d0;
}

.info {
  width: 24px;
  height: 22px;
}

.login {
  width: 120px;
  height: 22px;
  padding: 0 4px;
  gap: 5px;
}

.login .arrow {
  margin-left: auto;
}

.menu {
  width: 40px;
  gap: 5px;
}

.help {
  width: 45px;
  border-left: 1px solid #8b8b8b;
  gap: 8px;
}

.help svg {
  width: 17px;
  height: 17px;
}

.window-buttons {
  display: flex;
  margin-left: auto;
}

.window-buttons button {
  width: 45px;
  height: 28px;
}

.window-buttons svg {
  width: 12px;
  height: 12px;
  fill: none;
  stroke: #8c8c8c;
}

/* tool bars */
.toolbars {
  display: flex;
  flex-direction: column;
  flex: none;
  gap: 2px;
  padding-bottom: 4px;
}

.row {
  display: flex;
  overflow: hidden;
}

.bar {
  display: flex;
  flex: none;
  height: 25px;
  border: 1px solid #383838;
  border-right: none;
}

.bar.grow {
  flex: 1 0 0;
  min-width: 0;
}

.bar button {
  width: 23px;
}

/* dotted handle used to drag a bar */
.grip {
  flex: none;
  background-image: conic-gradient(transparent 75%, #1e1e1e 0);
  background-size: 2px 2px;
}

.bar .grip {
  width: 4px;
  margin: 4px 2px 4px 2px;
}

.bar:first-child .grip {
  margin-right: 1px;
}

.sep {
  flex: none;
  width: 6px;
  padding: 2px 0;
  border: solid transparent;
  border-width: 0 2px;
  background: linear-gradient(90deg, #222 50%, #d0d0d0 50%) content-box;
}

/* drawing area */
main {
  display: flex;
  flex: 1;
  min-height: 0;
}

.side {
  flex: none;
  overflow: hidden;
}

.left {
  width: 29px;
  padding-right: 4px;
}

.right {
  width: 31px;
  padding: 0 3px 0 4px;
}

.palette {
  display: flex;
  flex-direction: column;
  border: 1px solid #383838;
}

.palette + .palette {
  margin-top: 1px;
}

.palette button {
  height: 22px;
}

.palette .grip {
  width: 14px;
  height: 4px;
  margin: 2px 4px;
}

.text-tool {
  font-family: "Liberation Sans", sans-serif;
  font-size: 19px;
  color: #fff;
}

.canvas {
  flex: 1;
  min-width: 0;
  position: relative;
  background-color: #212830;
}

.drawing {
  display: block;
  width: 100%;
  height: 100%;
  fill: none;
  stroke: #e9ebec;
}

.doc-buttons {
  position: absolute;
  top: 5px;
  right: 6px;
  display: flex;
}

.doc-buttons button {
  width: 20px;
  height: 20px;
}

.doc-buttons svg {
  width: 12px;
  height: 12px;
  fill: none;
  stroke: #eee;
}

/* command line */
.command {
  display: flex;
  flex: none;
  height: 59px;
  border-top: 2px solid #686868;
  border-bottom: 1px solid #8a8a8a;
}

.command-side {
  display: flex;
  flex-direction: column;
  width: 23px;
  background: linear-gradient(#8d8d8d, #3a3a3a);
}

.command-side .grip {
  height: 6px;
  margin: 2px 3px;
  background-image: conic-gradient(transparent 75%, #c4c4c4 0);
  background-size: 3px 3px;
}

.command-side button {
  height: 23px;
}

.command-body {
  display: flex;
  flex-direction: column;
  flex: 1;
}

.history {
  flex: 1;
  padding: 1px 2px;
  background-color: #c6c6c6;
  border-bottom: 1px solid #777;
  color: #000;
  font-family: "Noto Sans CJK SC", sans-serif;
  font-size: 13px;
  line-height: 15px;
}

.history p {
  height: 15px;
}

.history span {
  font-family: "Liberation Mono", monospace;
  font-size: 12px;
  line-height: 1;
  white-space: pre;
}

.prompt {
  display: flex;
  height: 22px;
  background-color: #fff;
}

.prompt button {
  width: 34px;
  gap: 3px;
}

.prompt input {
  flex: 1;
  padding-left: 3px;
  font-size: 13px;
  font-style: italic;
}

.prompt input::placeholder {
  color: #9a9a9a;
}

/* status bar */
.status {
  display: flex;
  flex: none;
  justify-content: flex-end;
  height: 29px;
  padding-top: 1px;
  background-color: #373737;
}

.group {
  display: flex;
  flex: none;
  padding-right: 1px;
  background-color: #505050;
  border: 1px solid #7c7c7c;
  border-right: none;
  color: #bdbdbd;
}

.group button {
  width: 24px;
}

.group .drop {
  width: 14px;
}

.group .on {
  color: #2f8ef5;
}

.perf button {
  width: 20px;
}

.perf svg {
  width: 18px;
  height: 18px;
}

.watermark {
  position: absolute;
  right: 16px;
  bottom: 10px;
  color: #fff;
  font-family: "Liberation Sans", "Noto Sans CJK SC", sans-serif;
  font-size: 21px;
  line-height: 30px;
  text-shadow: 1px 1px 1px #000, 2px 2px 1px #222;
  pointer-events: none;
}
```
